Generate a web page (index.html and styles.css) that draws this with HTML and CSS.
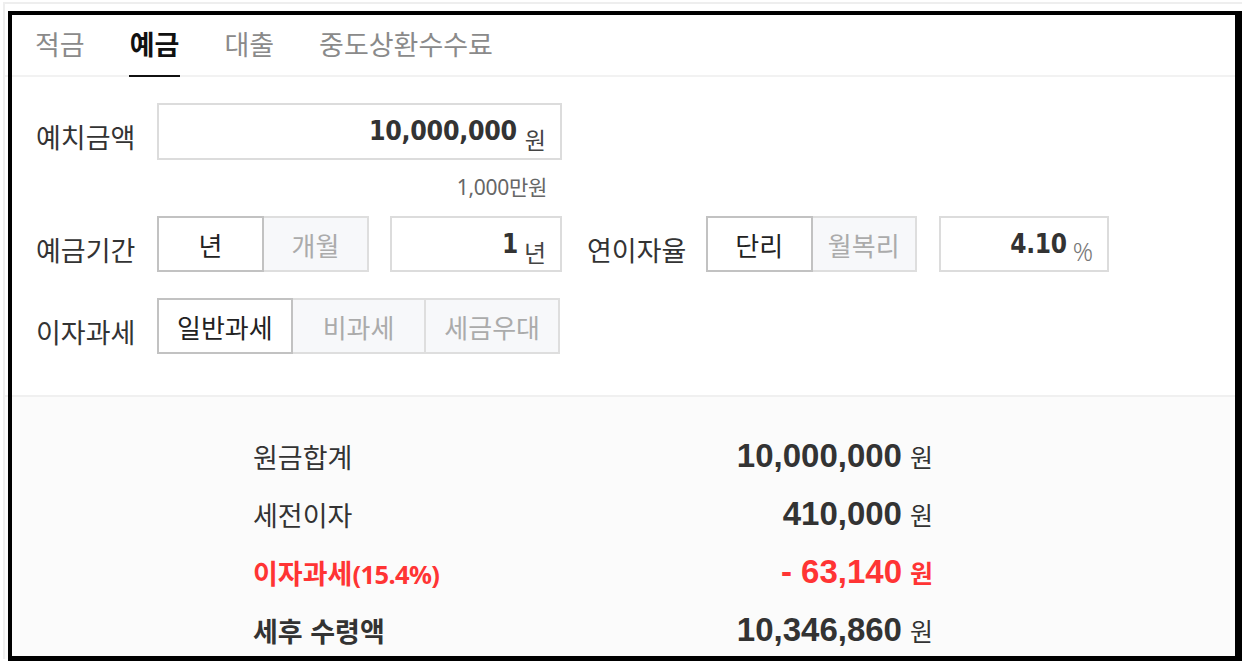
FILE: index.html
```
<!DOCTYPE html>
<html lang="ko">
<head>
<meta charset="utf-8">
<title>예금 계산기</title>
<link rel="stylesheet" href="styles.css">
</head>
<body>
<div class="page">
  <nav class="tabs">
    <span class="tab">적금</span>
    <span class="tab active">예금</span>
    <span class="tab">대출</span>
    <span class="tab">중도상환수수료</span>
  </nav>

  <section class="form">
    <div class="row row1">
      <span class="label">예치금액</span>
      <div class="input w-amount"><span class="num">10,000,000</span><span class="unit">원</span></div>
    </div>
    <div class="hint"><span>1,000만원</span></div>

    <div class="row">
      <span class="label">예금기간</span>
      <div class="toggle w-period">
        <span class="seg on">년</span>
        <span class="seg">개월</span>
      </div>
      <div class="input w-small gap"><span class="num sm">1</span><span class="unit u-year">년</span></div>
      <span class="label label2">연이자율</span>
      <div class="toggle w-rate">
        <span class="seg on">단리</span>
        <span class="seg">월복리</span>
      </div>
      <div class="input w-rate-in gap2"><span class="num sm">4.10</span><span class="unit pct">%</span></div>
    </div>

    <div class="row row3">
      <span class="label">이자과세</span>
      <div class="toggle w-tax">
        <span class="seg on">일반과세</span>
        <span class="seg">비과세</span>
        <span class="seg">세금우대</span>
      </div>
    </div>
  </section>

  <section class="results">
    <div class="res-row">
      <span class="res-label">원금합계</span>
      <span class="res-val"><b>10,000,000</b><i>원</i></span>
    </div>
    <div class="res-row">
      <span class="res-label">세전이자</span>
      <span class="res-val"><b>410,000</b><i>원</i></span>
    </div>
    <div class="res-row red">
      <span class="res-label strong">이자과세<span class="paren">(15.4%)</span></span>
      <span class="res-val"><b>- 63,140</b><i class="strong">원</i></span>
    </div>
    <div class="res-row">
      <span class="res-label strong">세후 수령액</span>
      <span class="res-val"><b>10,346,860</b><i>원</i></span>
    </div>
  </section>
</div>
<div class="frame"></div>
</body>
</html>
```

FILE: styles.css
```
html, body {
  margin: 0;
  padding: 0;
  background: #fff;
  overflow: hidden;
}
body {
  font-family: "Noto Sans", "Noto Sans CJK KR", sans-serif;
  color: #333;
  position: relative;
  height: 661px;
}
.page {
  margin: 2px 0 0 3px;
  border-top: 2px solid #eeeeee;
  border-left: 2px solid #eeeeee;
}

/* tabs */
.tabs {
  display: flex;
  align-items: stretch;
  height: 73px;
  padding: 8px 0 0 30px;
  box-sizing: border-box;
  border-bottom: 2px solid #f2f2f2;
  gap: 45px;
}
.tab {
  display: flex;
  align-items: center;
  font-family: "Noto Sans CJK KR", sans-serif;
  font-size: 27px;
  color: #8a8a8a;
}
.tab.active {
  color: #111;
  font-weight: 700;
  padding: 0 1px;
  margin: 0 -1px -2px;
  border-bottom: 2px solid #111;
}

/* form */
.form {
  padding: 26px 0 41px 31px;
}
.row {
  display: flex;
  align-items: center;
  height: 56px;
}
.row1 {
  height: 57px;
}
.row3 {
  margin-top: 26px;
}
.label {
  width: 121px;
  flex: none;
  font-family: "Noto Sans CJK KR", sans-serif;
  font-size: 27px;
  color: #333;
  padding-top: 10px;
}
.label2 {
  width: 119px;
  margin-left: 25px;
}
.hint {
  width: 511px;
  text-align: right;
  margin: 15px 0 17px;
  height: 24px;
  line-height: 24px;
  font-size: 21px;
  color: #666;
  letter-spacing: -0.3px;
}

.input {
  height: 100%;
  box-sizing: border-box;
  border: 2px solid #dcdcdc;
  background: #fff;
  text-align: right;
  padding-right: 14px;
  line-height: 52px;
  white-space: nowrap;
}
.w-amount { width: 405px; }
.w-small { width: 172px; }
.w-rate-in { width: 170px; }
.gap { margin-left: 21px; }
.gap2 { margin-left: 22px; }

.num {
  font-family: "DejaVu Sans Condensed", "DejaVu Sans", sans-serif;
  font-stretch: condensed;
  font-weight: 700;
  font-size: 26.5px;
  color: #333;
  letter-spacing: -0.3px;
}
.num.sm {
  font-size: 26px;
}
.unit {
  font-family: "Noto Sans CJK KR", sans-serif;
  font-size: 23px;
  color: #444;
  margin-left: 8px;
  vertical-align: -9px;
}
.u-year {
  font-size: 24px;
  margin-left: 6px;
}
.pct {
  font-family: "Noto Sans", sans-serif;
  font-weight: 300;
  font-size: 25px;
  color: #777;
  margin-left: 6px;
  vertical-align: -8px;
}

/* toggles */
.toggle {
  display: flex;
  height: 100%;
}
.w-period { width: 212px; }
.w-rate { width: 211px; }
.w-tax { width: 403px; }
.seg {
  flex: 1;
  display: flex;
  align-items: center;
  justify-content: center;
  box-sizing: border-box;
  border: 2px solid #dedede;
  background: #f7f8fa;
  color: #ababab;
  font-family: "Noto Sans CJK KR", sans-serif;
  font-size: 26px;
}
.seg + .seg {
  margin-left: -2px;
}
.seg.on {
  background: #fff;
  border-color: #c2c2c2;
  color: #222;
  position: relative;
  z-index: 1;
}

/* results */
.results {
  border-top: 2px solid #f0f0f0;
  background: #fbfbfb;
  padding: 30px 0 0 248px;
}
.res-row {
  display: flex;
  align-items: center;
  justify-content: space-between;
  width: 680px;
  height: 58px;
}
.res-label {
  font-family: "Noto Sans CJK KR", sans-serif;
  font-size: 27px;
  color: #333;
}
.res-label.strong {
  font-weight: 700;
}
.paren {
  font-family: "Noto Sans", sans-serif;
  font-size: 25.5px;
  letter-spacing: -0.6px;
}
.res-val {
  white-space: nowrap;
}
.res-val b {
  font-family: "Liberation Sans", sans-serif;
  font-weight: 700;
  font-size: 33px;
  color: #333;
}
.res-val i {
  font-style: normal;
  font-family: "Noto Sans CJK KR", sans-serif;
  font-size: 25px;
  color: #333;
  margin-left: 8px;
}
.res-val i.strong {
  font-weight: 700;
}
.red .res-label,
.red .res-val b,
.red .res-val i {
  color: #ff3434;
}

/* annotation frame drawn over the screenshot */
.frame {
  position: absolute;
  left: 8px;
  top: 11px;
  width: 1234px;
  height: 650px;
  box-sizing: border-box;
  border-style: solid;
  border-color: #000;
  border-width: 4px 7px 5px 4px;
  pointer-events: none;
}
```
